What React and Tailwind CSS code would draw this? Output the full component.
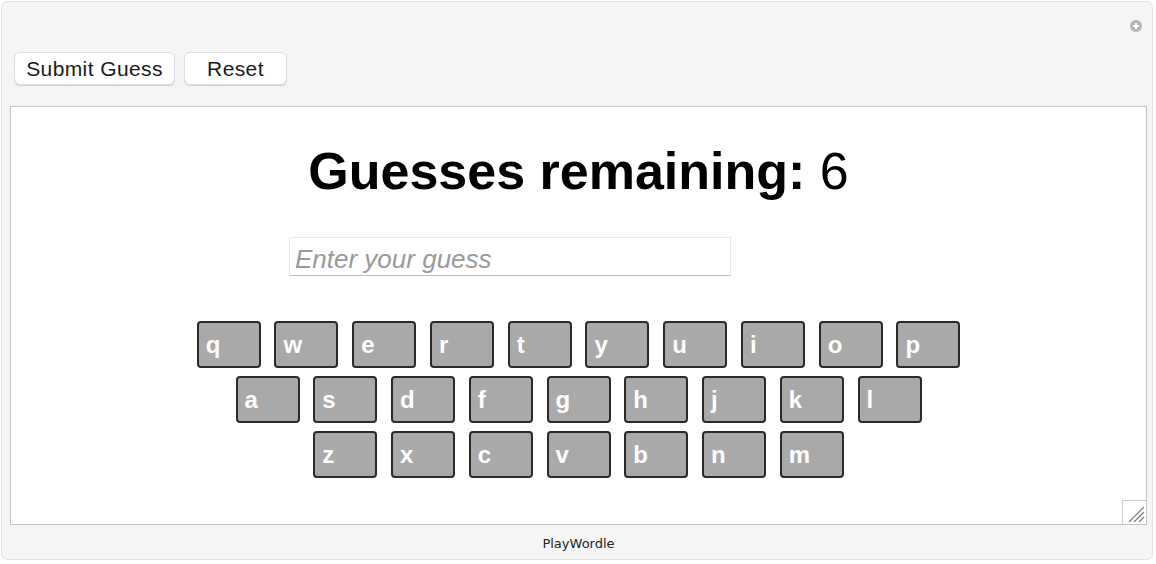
import React, { useState } from "react";

const rows = [
  ["q", "w", "e", "r", "t", "y", "u", "i", "o", "p"],
  ["a", "s", "d", "f", "g", "h", "j", "k", "l"],
  ["z", "x", "c", "v", "b", "n", "m"],
];

const Key = ({ letter }) => (
  <div className="flex h-[47px] w-[64px] items-center rounded-[4px] border-2 border-[#2a2a2a] bg-[#a9a9a9] pl-[7px] text-[24px] font-bold text-white">
    {letter}
  </div>
);

export default function App() {
  const [guess, setGuess] = useState("");
  const guessesLeft = 6;

  return (
    <div className="h-[564px] w-[1156px] bg-white p-[1px] font-['Liberation_Sans',Arial,sans-serif]">
      <div className="relative h-[559px] w-[1152px] rounded-[6px] border border-[#e3e3e3] bg-[#f5f5f5] pt-[50px] pl-[8px] pr-[5px]">
        {/* plus icon in the corner */}
        <div className="absolute right-[10px] top-[18px] flex h-[12px] w-[12px] items-center justify-center rounded-full bg-[#b4b4b4]">
          <svg width="8" height="8" viewBox="0 0 8 8">
            <path d="M4 1v6M1 4h6" stroke="white" strokeWidth="2" />
          </svg>
        </div>

        {/* buttons */}
        <div className="flex gap-[9px] pl-[4px] font-['Helvetica','Liberation_Sans',sans-serif]">
          <button className="h-[33px] w-[161px] rounded-[6px] border border-[#dedede] bg-white text-[21px] tracking-[0.4px] text-[#1a1a1a] shadow-[0_1px_1px_rgba(0,0,0,0.15)]">
            Submit Guess
          </button>
          <button className="h-[33px] w-[103px] rounded-[6px] border border-[#dedede] bg-white text-[21px] tracking-[0.4px] text-[#1a1a1a] shadow-[0_1px_1px_rgba(0,0,0,0.15)]">
            Reset
          </button>
        </div>

        {/* main area */}
        <div className="relative mt-[21px] h-[419px] w-[1137px] border border-[#c4c4c4] bg-white">
          <h1 className="mt-[38px] text-center text-[52px] leading-none font-bold text-black">
            Guesses remaining: <span className="font-normal">{guessesLeft}</span>
          </h1>

          <input
            type="text"
            value={guess}
            onChange={(e) => setGuess(e.target.value)}
            placeholder="Enter your guess"
            className="mt-[40px] ml-[278px] block h-[39px] w-[442px] border border-[#e8e8e8] border-b-[#bdbdbd] bg-white px-[5px] pt-[6px] pb-0 text-[26px] italic text-black outline-none placeholder:text-[#9a9a9a]"
          />

          <div className="mt-[45px] flex flex-col items-center gap-[8px]">
            {rows.map((row, i) => (
              <div key={i} className="flex gap-[13.75px]">
                {row.map((l) => (
                  <Key key={l} letter={l} />
                ))}
              </div>
            ))}
          </div>

          {/* resize grip */}
          <div className="absolute bottom-0 right-0 h-[24px] w-[24px] border-l border-t border-[#cfcfcf] bg-white">
            <svg width="23" height="23" viewBox="0 0 23 23">
              <path d="M6 21L21 6M11 21L21 11M16 21L21 16" stroke="#7a7a7a" strokeWidth="1.2" />
            </svg>
          </div>
        </div>

        {/* footer */}
        <div className="mt-[9px] text-center font-['DejaVu_Sans',sans-serif] text-[13px] text-[#222]">
          PlayWordle
        </div>
      </div>
    </div>
  );
}
